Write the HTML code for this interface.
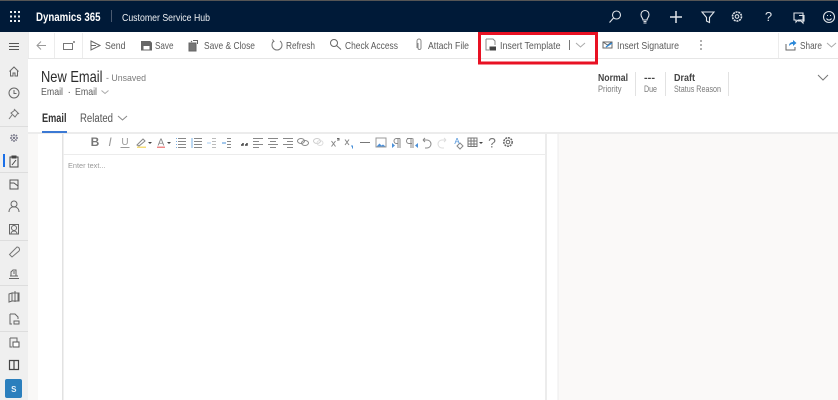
<!DOCTYPE html>
<html><head><meta charset="utf-8"><style>
html,body{margin:0;padding:0;background:#fff;width:838px;height:400px;overflow:hidden}
svg{display:block;filter:blur(.35px)}
text{font-family:"Liberation Sans",sans-serif}
.c{font-size:10.5px;fill:#5a5a5a}
.g{font-size:9.2px;fill:#7a7a7a}
.i{fill:none;stroke:#666;stroke-width:1}
.w{fill:none;stroke:#dfe3e8;stroke-width:1.1}
.t{fill:none;stroke:#888;stroke-width:1}
</style></head><body>
<svg width="838" height="400" viewBox="0 0 838 400" xmlns="http://www.w3.org/2000/svg">
<rect width="838" height="400" fill="#fff"/>
<rect x="28" y="133" width="10" height="267" fill="#f9f8f7"/>
<rect x="558" y="133" width="280" height="267" fill="#faf9f8"/>
<rect x="28" y="132" width="810" height="2" fill="#ececec"/>
<rect x="62" y="134" width="1.500" height="266" fill="#e2e2e2"/>
<rect x="545" y="134" width="2" height="266" fill="#ececec"/>
<rect x="557.500" y="134" width="1" height="266" fill="#ececec"/>
<rect x="63" y="154" width="483" height="1" fill="#ececec"/>
<rect y="0" width="838" height="1.500" fill="#555"/>
<rect y="1" width="838" height="31" fill="#001a38"/>
<g fill="#e8ecf0">
<rect x="10" y="11" width="2" height="2"/><rect x="14" y="11" width="2" height="2"/><rect x="18" y="11" width="2" height="2"/>
<rect x="10" y="15.500" width="2" height="2"/><rect x="14" y="15.500" width="2" height="2"/><rect x="18" y="15.500" width="2" height="2"/>
<rect x="10" y="20" width="2" height="2"/><rect x="14" y="20" width="2" height="2"/><rect x="18" y="20" width="2" height="2"/>
</g>
<text x="36" y="21" font-size="11.500" font-weight="700" fill="#fff" textLength="64.500" lengthAdjust="spacingAndGlyphs">Dynamics 365</text>
<rect x="111" y="10" width="1" height="12" fill="#4a5a70"/>
<text x="122" y="21" font-size="10.500" fill="#eef1f4" textLength="88" lengthAdjust="spacingAndGlyphs">Customer Service Hub</text>
<g class="w">
<circle cx="616.500" cy="15" r="4"/><path d="M613.500 18l-4 4.500"/>
<path d="M643.500 21.500h3M643.500 23h3M643 20c0-2-2-2.500-2-5.500a4 4 0 0 1 8 0c0 3-2 3.500-2 5.500z"/>
<path d="M676 11v12M670 17h12" stroke-width="1.500"/>
<path d="M702 12h12l-4.500 5.500v5l-3-1.500v-3.500z"/>
<circle cx="737" cy="16.500" r="1.800"/><circle cx="737" cy="16.500" r="4.500" stroke-width="1.600" stroke-dasharray="2 .8"/>
<path d="M794 13h9v7h-5l-2 2v-2h-2zM799 15.500h5v5.500h-1v2l-2-2h-3"/>
<circle cx="829" cy="17" r="5.500"/><path d="M826.500 18.500c1 2 4 2 5 0M827 15.500h1M830 15.500h1"/>
</g>
<text x="768.500" y="21" font-size="13" fill="#dfe3e8" text-anchor="middle">?</text>
<rect x="28" y="58" width="810" height="1" fill="#e6e6e6"/>
<rect x="28" y="32" width="1" height="26" fill="#ececec"/>
<rect x="54" y="33" width="1" height="25" fill="#ececec"/>
<rect x="82" y="33" width="1" height="25" fill="#ececec"/>
<rect x="778" y="33" width="1" height="25" fill="#ececec"/>
<g class="i">
<path d="M46 45.500h-9M41 41.500l-4 4 4 4" stroke="#999"/>
<path d="M63.500 43.500h9v6h-9zM73 42h2M74 41v2" stroke="#777"/>
<path d="M91 41l9 4.500-9 4.500zM91 45.500h5"/>
<path d="M141.500 41.500h8.500l1.500 1.500v7h-10z" fill="#666"/><rect x="143.500" y="46" width="6" height="3.500" fill="#fff" stroke="none"/>
<path d="M189 43h7v8h-7z" fill="#777"/><path d="M193 40.500h4M197.500 40v4M191 41l1 1"/>
<path d="M280 41a5 5 0 1 1-6 0M272.500 39.500l1.500 2-2 1" stroke="#777"/>
<circle cx="334" cy="43" r="3.500"/><path d="M336.500 45.500l4.500 4"/>
<path d="M418 43v5a1.500 1.500 0 0 0 3 0v-7a2 2 0 0 0-4 0v7" stroke="#888"/>
<path d="M486 39h7l2 2v4M486 39v11h3" stroke="#888"/><rect x="489.500" y="46.500" width="6.500" height="4" fill="#444" stroke="none"/>
<path d="M603 42h9v6h-9zM603 42l4.500 3 4.500-3"/><path d="M606 47l6-4" stroke="#2b88d8" stroke-width="1.200"/>
<path d="M786 44v6h9v-3"/><path d="M789 46c0-3 2-4 4-4v-2l3.500 3-3.500 3v-2c-2 0-3 1-4 2z" fill="#2b88d8" stroke="none"/>
</g>
<g fill="#777"><circle cx="701" cy="41" r=".9"/><circle cx="701" cy="45" r=".9"/><circle cx="701" cy="49" r=".9"/></g>
<text class="c" x="105" y="49" textLength="20.500" lengthAdjust="spacingAndGlyphs">Send</text>
<text class="c" x="155" y="49" textLength="18.500" lengthAdjust="spacingAndGlyphs">Save</text>
<text class="c" x="204" y="49" textLength="51" lengthAdjust="spacingAndGlyphs">Save &amp; Close</text>
<text class="c" x="286" y="49" textLength="29" lengthAdjust="spacingAndGlyphs">Refresh</text>
<text class="c" x="345" y="49" textLength="53" lengthAdjust="spacingAndGlyphs">Check Access</text>
<text class="c" x="428" y="49" textLength="41" lengthAdjust="spacingAndGlyphs">Attach File</text>
<text class="c" x="500" y="49" textLength="60.500" lengthAdjust="spacingAndGlyphs">Insert Template</text>
<rect x="569" y="40" width="1" height="10" fill="#777"/>
<path d="M576 43l4.500 4 4.500-4" fill="none" stroke="#aaa"/>
<text class="c" x="617" y="49" textLength="62" lengthAdjust="spacingAndGlyphs">Insert Signature</text>
<text class="c" x="800" y="49" textLength="22" lengthAdjust="spacingAndGlyphs">Share</text>
<path d="M827 43l4.500 4 4.500-4" fill="none" stroke="#aaa"/>
<rect x="479.500" y="33.500" width="117" height="29.500" fill="none" stroke="#e81123" stroke-width="3"/>
<rect x="0" y="32" width="28" height="368" fill="#efefef"/>
<g fill="#ddd"><rect y="126" width="28" height="1"/><rect y="172" width="28" height="1"/><rect y="240" width="28" height="1"/><rect y="285" width="28" height="1"/><rect y="331" width="28" height="1"/></g>
<rect x="3" y="154" width="2" height="13" fill="#1a6fe8"/>
<g class="i">
<path d="M9 43.500h10M9 46.500h10M9 49.500h10" stroke="#555"/>
<path d="M9.500 71.500l4.500-4.500 4.500 4.500M10.500 71v5h2.500v-3h2v3h2.500v-5"/>
<circle cx="14" cy="93" r="5"/><path d="M14 90v3.500h2.500"/>
<path d="M11 113l4-3 3 3-3 4zM12 115l-3 4M14 109l5 5" stroke="#777"/>
<path d="M10 138h8M14 134v8M11 135l6 6M17 135l-6 6" stroke="#778" stroke-width="1.400" stroke-dasharray="2 1"/>
<path d="M10 157h8v10h-8zM12 156h4v2h-4zM12 165l4-5" stroke="#444"/>
<path d="M10 180h8v9h-8zM10 183h4l4 3"  stroke="#555"/>
<circle cx="14" cy="204" r="3"/><path d="M9 212c0-7 10-7 10 0"/>
<path d="M9.500 224.500h9v9.500h-9z"/><circle cx="14" cy="228" r="2.500"/><path d="M11 234c0-4 6-4 6 0"/>
<path d="M17 247a2.500 2.500 0 0 1 2 4l-7 6-2.500-2.500 6-6z" stroke="#777"/>
<path d="M9 278.500h10M10 276h8M11 276v-4l2-2h3v6M14 271v3"/>
<path d="M9 294l3-1v8l-3 1zM12 293h6v8h-6zM15 291v11M18 293l1 0v8h-1"/>
<path d="M10 314h5l3 3v2M10 314v10h2M14 321h5v3h-5z"/>
<path d="M10 338h7v9M10 338v9h2"/><rect x="13" y="342" width="6" height="5" fill="#fff" stroke="#555"/>
<path d="M9.500 360.500h9v9h-9zM14 360.500v9" stroke="#444" stroke-width="1.200"/>
</g>
<rect x="5" y="379" width="17" height="19" rx="2" fill="#2b7fbd"/>
<text x="13.800" y="392" font-size="8" font-weight="700" fill="#e8f2fa" text-anchor="middle">S</text>
<text x="41" y="82" font-size="16" fill="#2b2b2b" textLength="61.500" lengthAdjust="spacingAndGlyphs">New Email</text>
<text x="106" y="81" class="g" textLength="40" lengthAdjust="spacingAndGlyphs">- Unsaved</text>
<text x="41" y="95" class="c" textLength="22" lengthAdjust="spacingAndGlyphs">Email</text>
<text x="67.500" y="95" class="c">·</text>
<text x="75" y="95" class="c" textLength="22" lengthAdjust="spacingAndGlyphs">Email</text>
<path d="M101.500 90.500l3.500 3 3.500-3" fill="none" stroke="#aaa"/>
<text x="42" y="122" font-size="11.500" font-weight="700" fill="#333" textLength="24.500" lengthAdjust="spacingAndGlyphs">Email</text>
<rect x="42" y="131" width="25" height="2" fill="#3b79d4"/>
<text x="80" y="122" font-size="11.500" fill="#555" textLength="33" lengthAdjust="spacingAndGlyphs">Related</text>
<path d="M118 116l4.500 4 4.500-4" fill="none" stroke="#888"/>
<text x="598" y="81" font-size="10" font-weight="700" fill="#444" textLength="30" lengthAdjust="spacingAndGlyphs">Normal</text>
<text x="598" y="92" class="g" textLength="23.500" lengthAdjust="spacingAndGlyphs">Priority</text>
<rect x="635" y="72" width="1" height="24" fill="#e2e2e2"/>
<text x="644" y="81" font-size="10" font-weight="700" fill="#444" textLength="11" lengthAdjust="spacingAndGlyphs">---</text>
<text x="644" y="92" class="g" textLength="13" lengthAdjust="spacingAndGlyphs">Due</text>
<rect x="665" y="72" width="1" height="24" fill="#e2e2e2"/>
<text x="674" y="81" font-size="10" font-weight="700" fill="#444" textLength="21" lengthAdjust="spacingAndGlyphs">Draft</text>
<text x="674" y="92" class="g" textLength="47" lengthAdjust="spacingAndGlyphs">Status Reason</text>
<rect x="728" y="72" width="1" height="24" fill="#e2e2e2"/>
<path d="M818 75l5 5 5-5" fill="none" stroke="#777"/>
<text x="95" y="146" font-size="12" font-weight="700" fill="#777" text-anchor="middle">B</text>
<text x="110" y="146" font-size="12" font-style="italic" fill="#999" text-anchor="middle">I</text>
<text x="125" y="145" font-size="10" fill="#999" text-anchor="middle">U</text>
<path d="M120.500 147.500h9" stroke="#999" fill="none"/>
<path d="M137 145l6-6 2 2-6 5z" fill="none" stroke="#888"/><rect x="137" y="146.500" width="9" height="1.500" fill="#f5dc78"/>
<path d="M148 142h4l-2 2zM167 142h4l-2 2zM479 142h4l-2 2z" fill="#444"/>
<text x="161" y="145.500" font-size="10" fill="#888" text-anchor="middle">A</text>
<rect x="157" y="146.500" width="8" height="1.500" fill="#e88"/>
<g class="t">
<path d="M178 138.500h8M178 141.500h8M178 144.500h8M178 147.500h8"/><path d="M176 138.500h1M176 141.500h1M176 144.500h1M176 147.500h1" stroke="#7ab0e4"/>
<path d="M194 138.500h8M194 141.500h8M194 144.500h8M194 147.500h8" /><path d="M192 138v10" stroke="#7ab0e4"/>
<path d="M212 138.500h4M212 141.500h4M212 144.500h4M212 147.500h4" stroke="#bbb"/><path d="M207 143h4" stroke="#a8cdf0"/>
<path d="M227 138.500h4M227 141.500h4M227 144.500h4M227 147.500h4"/><path d="M222 143h4" stroke="#4a90d9"/>
<path d="M253 138.500h10M253 141.500h6M253 144.500h10M253 147.500h6"/>
<path d="M268 138.500h10M270 141.500h6M268 144.500h10M270 147.500h6"/>
<path d="M283 138.500h10M287 141.500h6M283 144.500h10M287 147.500h6"/>
<ellipse cx="301" cy="141" rx="3.500" ry="2.500"/><ellipse cx="305" cy="143" rx="3.500" ry="2.500"/>
<ellipse cx="317" cy="141" rx="3.500" ry="2.500" stroke="#ccc"/><ellipse cx="320" cy="143" rx="3" ry="2.500" stroke="#ddd"/>
<path d="M331.500 141l4 5.500M335.500 141l-4 5.500M345 139.500l4 5.500M349 139.500l-4 5.500"/>
<path d="M360 142.500h10" stroke="#777"/>
<path d="M337 138.500h2v1.500h-2" stroke="#666"/><path d="M351 146h1.500v2.500" stroke="#4a90d9"/>
<rect x="376" y="138" width="10" height="9" stroke="#999"/>
<path d="M398 138.500v9.500M400 138.500v9.500M400 138.500h-3.500a2.500 2.500 0 0 0 0 5h1.500M407 138.500h5.500M411 138.500v9.500M413 138.500v9.500M412 143.500h-3a2.500 2.500 0 0 1 0-5"/>
<path d="M423 140h4a3.500 3.500 0 0 1 0 8h-2M423 140l2-2M423 140l2 2"/>
<path d="M446 140h-4a3.500 3.500 0 0 0 0 8h2M446 140l-2-2M446 140l-2 2" stroke="#ddd"/>
<path d="M457 146l3-3 3 3-3 3z"/>
<rect x="468" y="138" width="9" height="8.500" stroke="#777"/><path d="M468 141h9M468 144h9M471 138v8M474 138v8" stroke="#777"/>
<circle cx="508" cy="142" r="1.800" stroke="#666"/><circle cx="508" cy="142" r="4.200" stroke="#666" stroke-width="1.500" stroke-dasharray="2 .8"/>
</g>
<path d="M241 145h2v-2M245 145h2v-2" fill="none" stroke="#444" stroke-width="1.500"/>
<path d="M376.500 146.500l3-3 2 2 1.500-1 2.500 2z" fill="#4a90d9"/>
<path d="M392 143l3 2.500-3 2.500zM418 143l-3 2.500 3 2.500z" fill="#4a90d9"/>
<text x="457" y="144" font-size="8" fill="#4a90d9" text-anchor="middle">A</text>
<text x="492" y="147.500" font-size="14" fill="#777" text-anchor="middle">?</text>
<text x="68" y="168" font-size="7.500" fill="#999" textLength="37.500" lengthAdjust="spacingAndGlyphs">Enter text...</text>
</svg>
</body></html>
